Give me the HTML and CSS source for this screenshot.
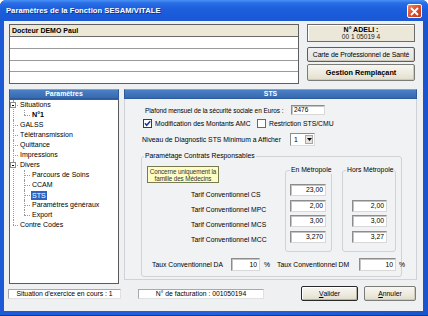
FILE: index.html
```html
<!DOCTYPE html>
<html lang="fr">
<head>
<meta charset="utf-8">
<title>Paramètres de la Fonction SESAM/VITALE</title>
<link rel="stylesheet" href="styles.css">
</head>
<body>
<div class="window">
  <div class="titlebar">
    <span class="title">Paramètres de la Fonction SESAM/VITALE</span>
    <span class="close"><svg width="9" height="9" viewBox="0 0 9 9"><path d="M1 1L8 8M8 1L1 8" stroke="#fff" stroke-width="1.8" fill="none"/></svg></span>
  </div>
  <div class="client">
    <div class="top">
      <div class="names">
        <div class="nrow head">Docteur DEMO Paul</div>
        <div class="nrow"></div>
        <div class="nrow"></div>
        <div class="nrow"></div>
        <div class="nrow"></div>
      </div>
      <div class="ident">
        <div class="adeli"><b>N° ADELI :</b><span>00 1 05019 4</span></div>
        <div class="btn cps">Carte de Professionnel de Santé</div>
        <div class="btn remp">Gestion Remplaçant</div>
      </div>
    </div>

    <div class="main">
      <div class="col">
        <div class="hdr">Paramètres</div>
        <div class="tree">
          <ul class="root">
            <li><div class="row"><span class="box"></span>Situations</div>
              <ul><li><div class="row b">N°1</div></li></ul>
            </li>
            <li><div class="row">GALSS</div></li>
            <li><div class="row">Télétransmission</div></li>
            <li><div class="row">Quittance</div></li>
            <li><div class="row">Impressions</div></li>
            <li><div class="row"><span class="box"></span>Divers</div>
              <ul>
                <li><div class="row">Parcours de Soins</div></li>
                <li><div class="row">CCAM</div></li>
                <li><div class="row"><span class="sel">STS</span></div></li>
                <li><div class="row">Paramètres généraux</div></li>
                <li><div class="row">Export</div></li>
              </ul>
            </li>
            <li><div class="row">Contre Codes</div></li>
          </ul>
        </div>
      </div>

      <div class="col">
        <div class="hdr">STS</div>
        <div class="panel">
          <div class="r-plafond">
            <span class="lbl-plafond">Plafond mensuel de la sécurité sociale en Euros :</span>
            <span class="inp w-plafond">2476</span>
          </div>
          <div class="r-checks">
            <span class="chk-item">
              <svg class="chk" width="9" height="9" viewBox="0 0 9 9"><rect x="0.5" y="0.5" width="8" height="8" fill="#fff" stroke="#1c3f7a"/><path d="M2 4.3L3.7 6.2L7.2 2.2" stroke="#1d3a8f" stroke-width="1.6" fill="none"/></svg>
              <span>Modification des Montants AMC</span>
            </span>
            <span class="chk-item">
              <svg class="chk" width="9" height="9" viewBox="0 0 9 9"><rect x="0.5" y="0.5" width="8" height="8" fill="#fff" stroke="#6a6a6a"/></svg>
              <span>Restriction STS/CMU</span>
            </span>
          </div>
          <div class="r-niveau">
            <span class="lbl-niveau">Niveau de Diagnostic STS Minimum a Afficher</span>
            <span class="combo"><span class="cv">1</span><span class="arrow"><svg width="5" height="3" viewBox="0 0 5 3"><path d="M0 0H5L2.5 3Z" fill="#000"/></svg></span></span>
          </div>

          <fieldset class="group">
            <legend>Paramétage Contrats Responsables</legend>
            <div class="g-top">
              <div class="g-left">
                <div class="note">Concerne uniquement la<br>famille des Médecins</div>
                <div class="tarifs">
                  <div>Tarif Conventionnel CS</div>
                  <div>Tarif Conventionnel MPC</div>
                  <div>Tarif Conventionnel MCS</div>
                  <div>Tarif Conventionnel MCC</div>
                </div>
              </div>
              <fieldset class="sub en">
                <legend>En Métropole</legend>
                <span class="inp num">23,00</span>
                <span class="inp num">2,00</span>
                <span class="inp num">3,00</span>
                <span class="inp num">3,270</span>
              </fieldset>
              <fieldset class="sub hors">
                <legend>Hors Métropole</legend>
                <span class="inp num ghost"></span>
                <span class="inp num">2,00</span>
                <span class="inp num">3,00</span>
                <span class="inp num">3,27</span>
              </fieldset>
            </div>
            <div class="g-bottom">
              <span class="lbl-da">Taux Conventionnel DA</span>
              <span class="inp num w-da">10</span>
              <span class="pct">%</span>
              <span class="lbl-dm">Taux Conventionnel DM</span>
              <span class="inp num w-dm">10</span>
              <span class="pct2">%</span>
            </div>
          </fieldset>
        </div>
      </div>
    </div>

    <div class="bottom">
      <span class="status s1">Situation d'exercice en cours : 1</span>
      <span class="status s2">N° de facturation : 001050194</span>
      <span class="spacer"></span>
      <span class="btn action default"><u>V</u>alider</span>
      <span class="btn action"><u>A</u>nnuler</span>
    </div>
  </div>
</div>
</body>
</html>
```

FILE: styles.css
```css
* { box-sizing: border-box; }
html, body { margin: 0; padding: 0; }
body {
  width: 428px;
  height: 316px;
  overflow: hidden;
  font-family: "Liberation Sans", Arial, sans-serif;
  font-size: 6.8px;
  color: #000;
  background: #fff;
}

.window {
  width: 428px;
  height: 316px;
  display: flex;
  flex-direction: column;
  background: linear-gradient(90deg, #1d5ad6 0, #2561dc 50%, #1a55d0 100%);
  border-radius: 6px 6px 0 0;
  border-bottom: 1px solid #0a3aa8;
}

.titlebar {
  height: 21px;
  flex: none;
  display: flex;
  align-items: center;
  padding: 0 6px 0 6px;
  background: linear-gradient(#4a92f6 0, #2a6ee6 3px, #1d5edc 9px, #1a5ad8 16px, #1c58d2 21px);
  border-radius: 6px 6px 0 0;
}
.title {
  color: #fff;
  font-weight: bold;
  font-size: 7.6px;
  letter-spacing: 0.05px;
  text-shadow: 1px 1px 0 #0b3594;
  flex: 1;
}
.close {
  width: 15px;
  height: 14px;
  display: flex;
  align-items: center;
  justify-content: center;
  background: linear-gradient(135deg, #f08a6a 0, #e0522e 45%, #c73a1c 100%);
  border: 1px solid #fff;
  border-radius: 2px;
  margin-top: 1px;
}

.client {
  flex: 1;
  margin: 0 5px 4px 4px;
  background: #eff0f2;
  padding: 3px 6px 0 5px;
  display: flex;
  flex-direction: column;
}

/* top */
.top {
  height: 60px;
  display: flex;
  gap: 8px;
}
.names {
  width: 290px;
  border: 1px solid #5f5f5f;
  background: #fff;
  display: flex;
  flex-direction: column;
}
.nrow {
  flex: 1;
  border-bottom: 1px solid #9a9a9a;
  line-height: 11px;
  padding-left: 2px;
}
.nrow:last-child { border-bottom: 0; }
.nrow.head {
  background: #ebe8d8;
  font-weight: bold;
  font-size: 7px;
  border-bottom: 1px solid #6a6a6a;
}

.ident {
  width: 108px;
  display: flex;
  flex-direction: column;
}
.adeli {
  height: 18px;
  background: #ebe8da;
  border: 1px solid #6c6c6c;
  box-shadow: inset 1px 1px 0 #fff;
  display: flex;
  flex-direction: column;
  align-items: center;
  justify-content: center;
  line-height: 7.5px;
}
.adeli b { font-size: 7px; }
.adeli span { font-size: 6.6px; color: #222; }

.btn {
  display: flex;
  align-items: center;
  justify-content: center;
  border: 1px solid #7b7b78;
  border-radius: 2px;
  background: linear-gradient(#f7f6f1 0, #ece9dd 60%, #e1ddcd 100%);
  box-shadow: inset -1px -1px 0 #cfcabb;
  white-space: nowrap;
}
.cps {
  height: 15px;
  margin-top: 5px;
  font-size: 6.9px;
  letter-spacing: -0.1px;
  background: linear-gradient(#f0f0ee, #e3e3e0);
  border-color: #5e5e5e;
}
.remp {
  height: 17px;
  margin-top: 2px;
  font-weight: bold;
  font-size: 7.3px;
}

/* main */
.main {
  margin-top: 5px;
  height: 195px;
  display: grid;
  grid-template-columns: 110px 293px;
  column-gap: 5px;
}
.col {
  display: flex;
  flex-direction: column;
}
.hdr {
  height: 10px;
  flex: none;
  background: linear-gradient(#4a80c6, #3769b0);
  border: 1px solid #2d5b9c;
  border-top-color: #7da3d8;
  color: #fff;
  font-weight: bold;
  font-size: 6.9px;
  line-height: 8px;
  text-align: center;
}

/* tree */
.tree {
  flex: 1;
  background: #fff;
  border: 1px solid #5a5a5a;
  font-size: 7px;
}
.tree ul {
  list-style: none;
  margin: 0;
  padding: 0;
}
.tree ul.root { margin-left: 3px; }
.tree ul ul { margin-left: 4px; }
.tree li {
  position: relative;
  padding-left: 7px;
}
.tree ul ul li { padding-left: 8px; }
.tree li::before {
  content: "";
  position: absolute;
  left: 0;
  top: 0;
  bottom: 0;
  border-left: 1px dotted #9a9a9a;
}
.tree li:last-child::before { bottom: auto; height: 5px; }
.tree li::after {
  content: "";
  position: absolute;
  left: 0;
  top: 5px;
  width: 5px;
  border-top: 1px dotted #9a9a9a;
}
.tree ul ul li::after { width: 6px; }
.row {
  height: 10px;
  line-height: 10px;
  white-space: nowrap;
  display: flex;
  align-items: center;
}
.row.b { font-weight: bold; font-size: 7.2px; }
.box {
  position: absolute;
  left: -3px;
  top: 2px;
  width: 6px;
  height: 6px;
  border: 1px solid #8c8c8c;
  background: #fff;
  z-index: 1;
}
.box::after {
  content: "";
  position: absolute;
  left: 1px;
  top: 1.5px;
  width: 2px;
  border-top: 1px solid #000;
}
.sel {
  background: #2f63c0;
  color: #fff;
  padding: 0 1px;
  line-height: 9px;
  margin-left: -1px;
}

/* STS panel */
.panel {
  flex: 1;
  margin-bottom: 4px;
  border: 1px solid #cfd2d6;
  border-top: 0;
  background: #f1f2f4;
  padding: 6px 0 0 16px;
  display: flex;
  flex-direction: column;
}
.inp {
  display: inline-block;
  background: #fff;
  border: 1px solid;
  border-color: #8c8c8c #d8d8d8 #d8d8d8 #8c8c8c;
  box-shadow: inset 1px 1px 0 #c4c4c4;
  line-height: 9px;
  padding: 0 2px;
  white-space: nowrap;
}
.num { text-align: right; }

.r-plafond {
  height: 10px;
  display: flex;
  align-items: center;
}
.lbl-plafond {
  flex: none;
  width: 150px;
  padding-left: 4px;
  white-space: nowrap;
  font-size: 6.5px;
  letter-spacing: -0.08px;
  overflow: hidden;
}
.w-plafond { flex: none; width: 34px; height: 10px; line-height: 8px; font-size: 6.4px; }

.r-checks {
  margin-top: 4px;
  height: 9px;
  display: flex;
  align-items: center;
  padding-left: 2px;
}
.chk-item {
  display: flex;
  align-items: center;
  gap: 3px;
  white-space: nowrap;
}
.chk-item:first-child { width: 114px; flex: none; }
.chk { flex: none; display: block; }

.r-niveau {
  margin-top: 5px;
  height: 13px;
  display: flex;
  align-items: center;
}
.lbl-niveau { flex: none; width: 149px; padding-left: 1px; white-space: nowrap; }
.combo {
  flex: none;
  width: 25px;
  height: 13px;
  background: #fff;
  border: 1px solid;
  border-color: #8c8c8c #dcdcdc #dcdcdc #8c8c8c;
  display: flex;
  align-items: center;
  justify-content: space-between;
  padding: 1px;
}
.cv { padding-left: 2px; }
.arrow {
  width: 8px;
  height: 9px;
  background: #e6e4dc;
  border: 1px solid #a8a8a8;
  display: flex;
  align-items: center;
  justify-content: center;
}
.arrow svg { display: block; }

.group {
  margin: 6px 0 0 0;
  padding: 0;
  width: 261px;
  height: 125px;
  border: 1px solid #d2d2d2;
  border-radius: 3px;
  min-inline-size: 0;
}
.group legend, .sub legend {
  padding: 0 1px;
  margin-left: 2px;
  line-height: 8px;
  white-space: nowrap;
}

.g-top {
  display: flex;
  height: 92px;
}
.g-left {
  width: 143px;
  flex: none;
  padding: 6px 0 0 5px;
}
.note {
  width: 72px;
  height: 17px;
  background: #fdfdc4;
  border: 1px solid #7a7a50;
  text-align: center;
  line-height: 7.4px;
  font-size: 6.3px;
  letter-spacing: -0.1px;
  padding-top: 0.5px;
  color: #333;
  white-space: nowrap;
}
.tarifs {
  margin: 4px 0 0 44px;
}
.tarifs div {
  height: 15px;
  line-height: 15px;
  white-space: nowrap;
}

.sub {
  margin: 6px 0 0 0;
  padding: 10px 0 0 4px;
  height: 86px;
  border: 1px solid #d2d2d2;
  border-radius: 3px;
  display: flex;
  flex-direction: column;
  gap: 3.5px;
  min-inline-size: 0;
  flex: none;
}
.sub.en { width: 47px; }
.sub.hors { width: 54px; margin-left: 10px; padding-left: 3px; }
.sub legend { margin-left: 0; }
.sub .inp { height: 12px; line-height: 10px; width: 36px; }
.sub.hors .inp { width: 35px; margin-left: 6px; }
.ghost { visibility: hidden; }

.g-bottom {
  margin-top: 6px;
  height: 13px;
  display: flex;
  align-items: center;
  padding-left: 10px;
}
.lbl-da { flex: none; width: 79px; white-space: nowrap; }
.w-da { flex: none; width: 29px; height: 13px; line-height: 11px; }
.pct { flex: none; width: 17px; padding-left: 4px; }
.lbl-dm { flex: none; width: 82px; white-space: nowrap; }
.w-dm { flex: none; width: 37px; height: 13px; line-height: 11px; }
.pct2 { margin-left: 3px; }

/* bottom */
.bottom {
  margin-top: 2px;
  height: 15px;
  display: flex;
  align-items: center;
}
.status {
  height: 10px;
  background: #fff;
  border: 1px solid;
  border-color: #a8a8a8 #e0e0e0 #e0e0e0 #a8a8a8;
  text-align: center;
  line-height: 8px;
  white-space: nowrap;
}
.s1 { width: 113px; margin-left: -1px; }
.s2 { width: 126px; margin-left: 17px; }
.spacer { flex: 1; }
.action {
  height: 15px;
  width: 52px;
  margin-right: 1px;
}
.action.default {
  width: 57px;
  margin-right: 6px;
  border-color: #2a2a2a;
  box-shadow: inset -1px -1px 0 #b8b4a4, inset 1px 1px 0 #fff;
}
```
